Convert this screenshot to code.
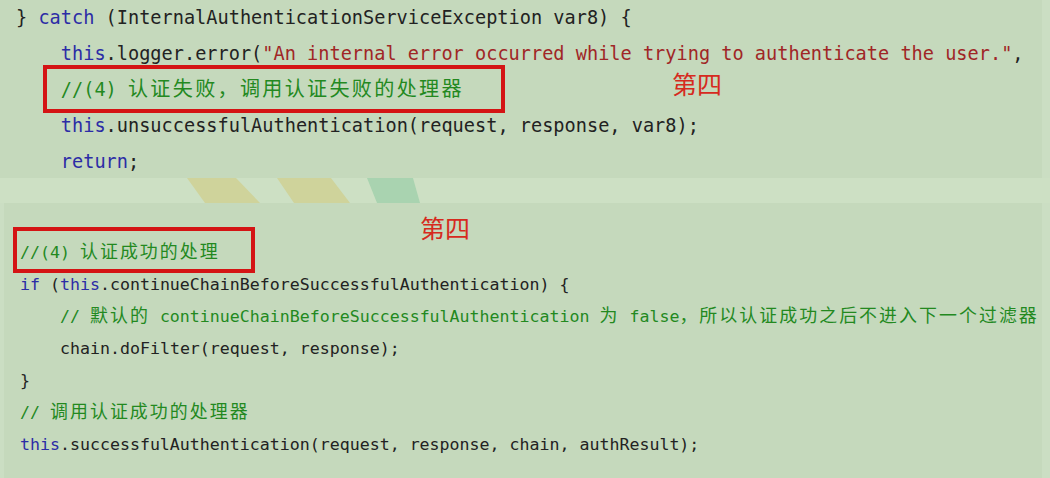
import React from "react";

const CJK = /([\u3000-\u303f\u4e00-\u9fff\uff00-\uffef]+)/;

// split text so CJK runs get double-width cells like the editor font
function T({ children, className = "" }: { children: string; className?: string }) {
  const parts = children.split(CJK);
  return (
    <span className={className}>
      {parts.map((p, i) =>
        CJK.test(p) ? (
          <span key={i} className="font-['Noto_Sans_CJK_SC',sans-serif] text-[1.08em] leading-none tracking-[0.115em]">
            {p}
          </span>
        ) : (
          <React.Fragment key={i}>{p}</React.Fragment>
        )
      )}
    </span>
  );
}

const K = ({ children }: { children: string }) => <span className="text-[#2c2ca6]">{children}</span>;
const S = ({ children }: { children: string }) => <span className="text-[#a02626]">{children}</span>;
const C = ({ children }: { children: string }) => <T className="text-[#23891f]">{children}</T>;

function Band() {
  return (
    <svg width="1050" height="25" viewBox="0 0 1050 25" className="block">
      <rect width="1050" height="25" fill="#cde0c4" />
      <polygon points="187,0 236,0 260,25 205,25" fill="#cfd39b" />
      <polygon points="277,0 331,0 350,25 294,25" fill="#cfd39b" />
      <polygon points="367,0 413,0 420,25 377,25" fill="#a9d3b0" />
    </svg>
  );
}

export default function App() {
  return (
    <div className="w-[1050px] h-[478px] overflow-hidden bg-[#cbdec3] font-['DejaVu_Sans_Mono','Noto_Sans_CJK_SC',monospace] text-[#222222] whitespace-pre">
      {/* top snippet */}
      <div className="relative w-[1042px] h-[178px] bg-[#c5d9bc] pl-[16px] text-[18.6px] leading-[36px] [&>div]:h-[36px]">
        <div>
          {"} "}
          <K>catch</K>
          {" (InternalAuthenticationServiceException var8) {"}
        </div>
        <div className="pl-[44.8px]">
          <K>this</K>
          {".logger.error("}
          <S>{'"An internal error occurred while trying to authenticate the user."'}</S>
          {","}
        </div>
        <div className="relative pl-[44.8px]">
          <C>{"//(4) 认证失败，调用认证失败的处理器"}</C>
          <div className="absolute left-[27px] top-[-7px] w-[462px] h-[48px] border-[4px] border-[#d41414]" />
        </div>
        <div className="pl-[44.8px]">
          <K>this</K>
          {".unsuccessfulAuthentication(request, response, var8);"}
        </div>
        <div className="pl-[44.8px]">
          <K>return</K>
          {";"}
        </div>
        <span className="absolute left-[672px] top-[68px] font-['Noto_Sans_CJK_SC',sans-serif] text-[25px] leading-[30px] text-[#d62a1e]">
          第四
        </span>
      </div>

      <Band />

      {/* bottom snippet */}
      <div className="relative ml-[4px] w-[1038px] h-[275px] bg-[#c5d9bc] pt-[34px] pl-[16px] text-[16.6px] leading-[32px] [&>div]:h-[32px]">
        <div className="relative">
          <C>{"//(4) 认证成功的处理"}</C>
          <div className="absolute left-[-7px] top-[-10px] w-[242px] h-[46px] border-[4px] border-[#d41414]" />
        </div>
        <div>
          <K>if</K>
          {" ("}
          <K>this</K>
          {".continueChainBeforeSuccessfulAuthentication) {"}
        </div>
        <div className="pl-[40px]">
          <C>{"// 默认的 continueChainBeforeSuccessfulAuthentication 为 false，所以认证成功之后不进入下一个过滤器"}</C>
        </div>
        <div className="pl-[40px]">{"chain.doFilter(request, response);"}</div>
        <div>{"}"}</div>
        <div>
          <C>{"// 调用认证成功的处理器"}</C>
        </div>
        <div>
          <K>this</K>
          {".successfulAuthentication(request, response, chain, authResult);"}
        </div>
        <span className="absolute left-[416px] top-[9px] font-['Noto_Sans_CJK_SC',sans-serif] text-[25px] leading-[30px] text-[#d62a1e]">
          第四
        </span>
      </div>
    </div>
  );
}
